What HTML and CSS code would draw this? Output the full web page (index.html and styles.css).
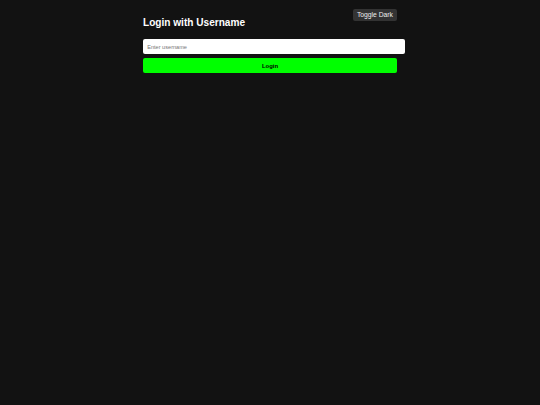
FILE: index.html
```html
<!DOCTYPE html>
<html>
<head>
<meta charset="utf-8">
<link rel="stylesheet" href="styles.css">
</head>
<body>
<div class="container">
  <button class="toggle">Toggle Dark</button>
  <h2 class="title">Login with Username</h2>
  <input class="username" type="text" placeholder="Enter username">
  <button class="login">Login</button>
</div>
</body>
</html>
```
FILE: styles.css
```css
html, body {
  margin: 0;
  padding: 0;
  background: #121212;
  height: 100%;
}
body {
  font-family: "Liberation Sans", Arial, sans-serif;
  color: #fff;
}
.container {
  position: relative;
  width: 254px;
  margin: 0 auto;
  padding-top: 17px;
  display: flex;
  flex-direction: column;
  align-items: flex-start;
}
.toggle {
  position: absolute;
  top: 9px;
  right: 0;
  height: 11.5px;
  padding: 0 4px;
  margin: 0;
  border: none;
  border-radius: 2px;
  background: #333;
  color: #eee;
  font-family: "Liberation Sans", Arial, sans-serif;
  font-size: 6.75px;
  line-height: 11.5px;
}
.title {
  margin: 0 0 10px 0;
  font-size: 10.1px;
  line-height: 12px;
  font-weight: bold;
  color: #fff;
}
.username {
  box-sizing: border-box;
  width: 262px;
  height: 15px;
  margin: 0 0 4px 0;
  padding: 0 4.2px;
  border: none;
  border-radius: 2px;
  background: #fff;
  font-family: "Liberation Sans", Arial, sans-serif;
  font-size: 5.6px;
  outline: none;
}
.username::placeholder {
  color: #777;
}
.login {
  box-sizing: border-box;
  width: 254px;
  height: 15px;
  margin: 0;
  padding: 0;
  border: none;
  border-radius: 2px;
  background: #00ff00;
  color: #000;
  font-family: "Liberation Sans", Arial, sans-serif;
  font-size: 5.9px;
  font-weight: bold;
}
```
